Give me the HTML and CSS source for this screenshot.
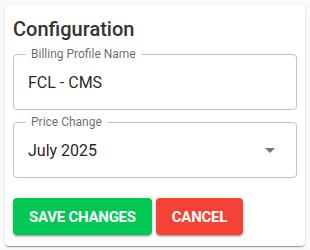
FILE: index.html
```html
<!DOCTYPE html>
<html lang="en">
  <head>
    <meta charset="UTF-8" />
    <meta name="viewport" content="width=device-width, initial-scale=1.0" />
    <title>Configuration</title>
    <link rel="stylesheet" href="styles.css">
  </head>
  <body>
    <div class="card">
      <h3>Configuration</h3>
      <div class="field">
        <span class="field-label">Billing Profile Name</span>
        <span class="field-value">FCL - CMS</span>
      </div>
      <div class="field select">
        <span class="field-label">Price Change</span>
        <span class="field-value">July 2025</span>
        <svg class="arrow" width="10" height="5" viewBox="0 0 10 5" aria-hidden="true">
          <path d="M0 0l5 5 5-5z" />
        </svg>
      </div>
      <div class="actions">
        <button class="btn btn-save">Save Changes</button>
        <button class="btn btn-cancel">Cancel</button>
      </div>
    </div>
  </body>
</html>
```

FILE: styles.css
```css
:root {
  --text-color: rgba(0, 0, 0, 0.87);
  --label-color: rgba(0, 0, 0, 0.6);
  --border-color: #c4c4c4;
  --save-color: #00c853;
  --cancel-color: #f44336;
}

body {
  margin: 0;
  padding: 5px;
  font-family: Roboto, "Liberation Sans", sans-serif;
  background: #fafafa;
  color: var(--text-color);
}

.card {
  width: 300px;
  box-sizing: border-box;
  padding: 8px 8px 11px;
  background: #ffffff;
  border-radius: 4px;
  box-shadow: 0 2px 1px -1px rgba(0, 0, 0, 0.2), 0 1px 1px 0 rgba(0, 0, 0, 0.14),
    0 1px 3px 0 rgba(0, 0, 0, 0.12);
}

h3 {
  margin: 0 0 9px 0;
  font-size: 20px;
  line-height: 32px;
  font-weight: 500;
  color: #333;
}

.field {
  position: relative;
  display: flex;
  align-items: center;
  height: 56px;
  box-sizing: border-box;
  padding: 0 14px;
  border: 1px solid var(--border-color);
  border-radius: 4px;
  margin-bottom: 12px;
}

.field-label {
  position: absolute;
  top: -8px;
  left: 12px;
  padding: 0 5px;
  background: #ffffff;
  font-size: 12px;
  line-height: 14px;
  color: var(--label-color);
}

.field-value {
  font-size: 16px;
  line-height: 23px;
}

.select .field-value {
  flex: 1;
}

.arrow {
  margin-right: 7px;
  fill: rgba(0, 0, 0, 0.54);
}

.actions {
  display: flex;
  gap: 4px;
  margin-top: 20px;
}

.btn {
  height: 37px;
  padding: 0 16px;
  border: none;
  border-radius: 4px;
  font-family: inherit;
  font-size: 15px;
  font-weight: 700;
  letter-spacing: -0.25px;
  text-transform: uppercase;
  color: #ffffff;
  cursor: pointer;
  box-shadow: 0 3px 1px -2px rgba(0, 0, 0, 0.2), 0 2px 2px 0 rgba(0, 0, 0, 0.14),
    0 1px 5px 0 rgba(0, 0, 0, 0.12);
}

.btn-save {
  background: var(--save-color);
}

.btn-cancel {
  background: var(--cancel-color);
}
```
